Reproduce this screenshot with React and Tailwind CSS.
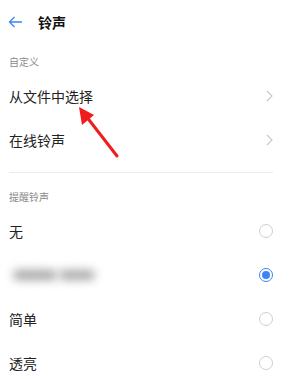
import React from "react";

const font = { fontFamily: '"Noto Sans CJK SC", "Noto Sans", sans-serif' };

function Chevron() {
  return (
    <svg width="7" height="12" viewBox="0 0 7 12" fill="none">
      <path d="M1 1l5 5-5 5" stroke="#c8c8c8" strokeWidth="1.1" />
    </svg>
  );
}

function Radio({ checked }) {
  if (checked) {
    return (
      <div className="w-[14px] h-[14px] rounded-full border-[1.5px] border-[#3d84f7] flex items-center justify-center">
        <div className="w-[8px] h-[8px] rounded-full bg-[#3d84f7]" />
      </div>
    );
  }
  return <div className="w-[14px] h-[14px] rounded-full border border-[#cfcfcf]" />;
}

function Row({ children, right }) {
  return (
    <div className="h-[44px] flex items-center justify-between pl-[9px] pr-[18px]">
      <div className="text-[14px] text-[#222]">{children}</div>
      {right}
    </div>
  );
}

export default function App() {
  return (
    <div className="relative w-[291px] h-[379px] bg-white overflow-hidden" style={font}>
      <div className="h-[44px] flex items-center pl-[8px]">
        <svg width="15" height="12" viewBox="0 0 15 12" fill="none">
          <path d="M14 6H1.5M6.5 1L1.5 6l5 5" stroke="#3d84f7" strokeWidth="1.3" />
        </svg>
        <span className="ml-[15px] text-[14px] font-bold text-[#111]">铃声</span>
      </div>
      <div className="h-[30px] flex items-end pb-[6px] pl-[9px] text-[10px] leading-[12px] text-[#8a8a8a]">自定义</div>
      <Row right={<Chevron />}>从文件中选择</Row>
      <Row right={<Chevron />}>在线铃声</Row>
      <div className="mt-[10px] ml-[9px] mr-[18px] h-px bg-[#ececec]" />
      <div className="h-[36px] flex items-end pb-[6px] pl-[9px] text-[10px] leading-[12px] text-[#8a8a8a]">提醒铃声</div>
      <Row right={<Radio />}>无</Row>
      <Row right={<Radio checked />}>
        <div className="flex items-center gap-[2px] pl-[4px]">
          <div className="w-[44px] h-[10px] rounded-full bg-[#a5a5a5] blur-[5px]" />
          <div className="w-[36px] h-[10px] rounded-full bg-[#a8a8a8] blur-[5px]" />
        </div>
      </Row>
      <Row right={<Radio />}>简单</Row>
      <Row right={<Radio />}>透亮</Row>
      <svg className="absolute left-0 top-0" width="291" height="379" viewBox="0 0 291 379">
        <path d="M117 156 L86 116" stroke="#f01d1d" strokeWidth="3" strokeLinecap="round" />
        <polygon points="79,107 94,115 82,125" fill="#f01d1d" />
      </svg>
    </div>
  );
}
